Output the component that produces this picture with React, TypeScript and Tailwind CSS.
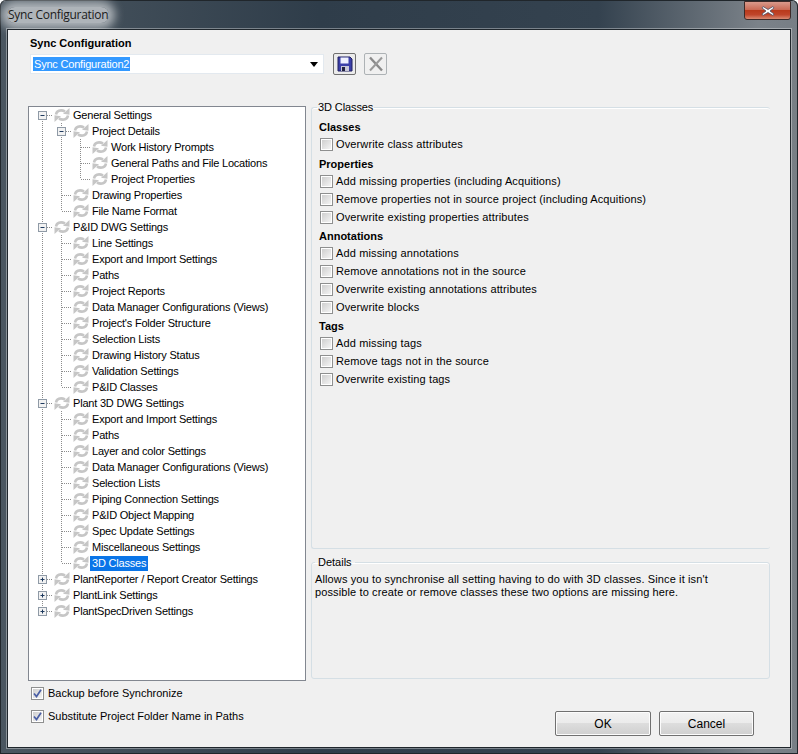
import React from 'react';

type TreeNode = { label: string; open?: boolean; selected?: boolean; children?: TreeNode[] };

const tree: TreeNode[] = [
  {
    label: 'General Settings',
    open: true,
    children: [
      {
        label: 'Project Details',
        open: true,
        children: [{ label: 'Work History Prompts' }, { label: 'General Paths and File Locations' }, { label: 'Project Properties' }],
      },
      { label: 'Drawing Properties' },
      { label: 'File Name Format' },
    ],
  },
  {
    label: 'P&ID DWG Settings',
    open: true,
    children: [
      { label: 'Line Settings' },
      { label: 'Export and Import Settings' },
      { label: 'Paths' },
      { label: 'Project Reports' },
      { label: 'Data Manager Configurations (Views)' },
      { label: "Project's Folder Structure" },
      { label: 'Selection Lists' },
      { label: 'Drawing History Status' },
      { label: 'Validation Settings' },
      { label: 'P&ID Classes' },
    ],
  },
  {
    label: 'Plant 3D DWG Settings',
    open: true,
    children: [
      { label: 'Export and Import Settings' },
      { label: 'Paths' },
      { label: 'Layer and color Settings' },
      { label: 'Data Manager Configurations (Views)' },
      { label: 'Selection Lists' },
      { label: 'Piping Connection Settings' },
      { label: 'P&ID Object Mapping' },
      { label: 'Spec Update Settings' },
      { label: 'Miscellaneous Settings' },
      { label: '3D Classes', selected: true },
    ],
  },
  { label: 'PlantReporter / Report Creator Settings', children: [] },
  { label: 'PlantLink Settings', children: [] },
  { label: 'PlantSpecDriven Settings', children: [] },
];

const sections = [
  { title: 'Classes', cls: 'mt-0', items: ['Overwrite class attributes'] },
  {
    title: 'Properties',
    cls: 'mt-[3px]',
    items: [
      'Add missing properties (including Acquitions)',
      'Remove properties not in source project (including Acquitions)',
      'Overwrite existing properties attributes',
    ],
  },
  {
    title: 'Annotations',
    cls: 'mt-[2px]',
    items: [
      'Add missing annotations',
      'Remove annotations not in the source',
      'Overwrite existing annotations attributes',
      'Overwrite blocks',
    ],
  },
  { title: 'Tags', cls: 'mt-[2px]', items: ['Add missing tags', 'Remove tags not in the source', 'Overwrite existing tags'] },
];

function SyncIcon() {
  return (
    <svg width="16" height="16" viewBox="0 0 16 16" className="shrink-0" fill="none">
      <path d="M2 7.5C2.5 4 6.5 2 11 4.5" stroke="#c6c6c6" strokeWidth="2.6" />
      <path d="M9 6.8L15.5 1V7.8Z" fill="#c6c6c6" />
      <path d="M14 8.5C13.5 12 9.5 14 5 11.5" stroke="#c6c6c6" strokeWidth="2.6" />
      <path d="M7 9.2L0.5 15V8.2Z" fill="#c6c6c6" />
    </svg>
  );
}

// one 19x16 cell of the tree: guide line, elbow and optional +/- box
function TreeCell({ guide, elbow, hasNext, box, open, top }: { guide?: boolean; elbow?: boolean; hasNext?: boolean; box?: boolean; open?: boolean; top?: boolean }) {
  return (
    <svg width="19" height="16" viewBox="0 0 19 16" className="shrink-0">
      <g stroke="#8c8c8c" strokeDasharray="1 1" fill="none">
        {guide && <path d="M9.5 0V16" />}
        {elbow && <path d={hasNext ? (top ? 'M9.5 8V16' : 'M9.5 0V16') : 'M9.5 0V8'} />}
        {elbow && <path d="M10 8.5H20" />}
      </g>
      {box && (
        <g>
          <rect x="5.5" y="4.5" width="8" height="8" fill="#f2f2f2" stroke="#8f9aa6" />
          <path d={open ? 'M7.5 8.5H11.5' : 'M7.5 8.5H11.5M9.5 6.5V10.5'} stroke="#1e3a5f" />
        </g>
      )}
    </svg>
  );
}

function TreeRows({ nodes, guides }: { nodes: TreeNode[]; guides: boolean[] }) {
  return (
    <>
      {nodes.map((node, i) => {
        const hasNext = i < nodes.length - 1;
        return (
          <React.Fragment key={node.label + i}>
            <div className="flex h-4 items-center">
              {guides.map((g, j) => (
                <TreeCell key={j} guide={g} />
              ))}
              <TreeCell elbow hasNext={hasNext} top={guides.length === 0 && i === 0} box={!!node.children} open={node.open} />
              <div className="ml-[2px] flex items-center">
                <SyncIcon />
                <span
                  className={
                    node.selected
                      ? 'ml-[1px] h-[15px] bg-[#0a75e8] px-[2px] leading-[15px] tracking-[-0.2px] whitespace-nowrap text-white'
                      : 'ml-[3px] leading-4 tracking-[-0.2px] whitespace-nowrap'
                  }
                >
                  {node.label}
                </span>
              </div>
            </div>
            {node.open && node.children && <TreeRows nodes={node.children} guides={[...guides, hasNext]} />}
          </React.Fragment>
        );
      })}
    </>
  );
}

function CheckBox({ checked }: { checked?: boolean }) {
  return (
    <span className="flex h-[13px] w-[13px] shrink-0 items-center justify-center border border-[#8e8f8f] bg-white p-[1px]">
      <span className="flex h-full w-full items-center justify-center bg-gradient-to-br from-[#cfcfcf] to-[#f4f4f4]">
        {checked && (
          <svg width="9" height="9" viewBox="0 0 9 9" fill="none">
            <path d="M1 4.5L3.5 7.5L8 0.8" stroke="#4a5fa5" strokeWidth="1.7" />
          </svg>
        )}
      </span>
    </span>
  );
}

function PushButton({ label, cls }: { label: string; cls: string }) {
  return (
    <button className={`${cls} flex h-[25px] items-center justify-center rounded-[2px] border border-[#707070] bg-[linear-gradient(#f2f2f2_0%,#ebebeb_48%,#dddddd_50%,#cfcfcf_100%)] text-[12px] text-black shadow-[inset_0_0_0_1px_#fcfcfc]`}>
      {label}
    </button>
  );
}

export default function App() {
  return (
    <div className="h-[754px] w-[798px] overflow-hidden bg-white font-['Liberation_Sans',sans-serif] text-[11px] text-black">
      <div className="flex h-full w-full flex-col rounded-t-[6px] bg-[linear-gradient(90deg,#4a5660_0%,#2f3d4a_40%,#34424f_75%,#7b8289_95%,#777e85_100%)] pr-[7px] pb-[6px] pl-[7px] shadow-[inset_0_0_0_1px_#20262b,inset_0_2px_0_-1px_#c8d0d6]">
        <div className="flex h-[29px] shrink-0 items-start justify-between bg-transparent">
          <span className="mt-[7px] rounded-full bg-[#c9cdd1]/80 px-[1px] font-['Open_Sans',sans-serif] text-[12px] leading-4 tracking-[-0.28px] text-[#1b1b1b] shadow-[0_0_10px_6px_rgba(201,205,209,0.8)]">
            Sync Configuration
          </span>
          <div className="mt-[1px] flex h-[19px] w-[47px] items-center justify-center rounded-b-[3px] border border-[#3d2a28] bg-[linear-gradient(#d99a8c_0%,#c96a55_45%,#b93a1c_50%,#c0452a_75%,#d98a72_100%)]">
            <svg width="16" height="12" viewBox="0 0 16 12">
              <path d="M3 1.5L8 4.5L13 1.5L14 3L10 6L14 9L13 10.5L8 7.5L3 10.5L2 9L6 6L2 3Z" fill="#ffffff" stroke="#4b4f66" strokeWidth="0.8" />
            </svg>
          </div>
        </div>

        <div className="flex min-h-0 flex-1 flex-col border border-[#1f262c] bg-[#f0f0f0] pr-[20px] pl-[20px] shadow-[0_0_0_1px_rgba(255,255,255,0.35)]">
          <div className="mt-[6px] pl-[2px] text-[11px] leading-[14px] font-bold">Sync Configuration</div>
          <div className="mt-[3px] flex items-center pl-[2px]">
            <div className="flex h-[20px] w-[294px] items-center justify-between border border-[#e3e9ef] bg-white pr-[4px] pl-[2px] text-[11px]">
              <span className="h-[14px] bg-[#3399ff] px-[1px] leading-[14px] tracking-[-0.2px] text-white">Sync Configuration2</span>
              <svg width="8" height="5" viewBox="0 0 8 5" className="mr-[1px]">
                <path d="M0 0H8L4 5Z" fill="#000000" />
              </svg>
            </div>
            <div className="ml-[9px] flex h-[22px] w-[23px] items-center justify-center rounded-[2px] border border-[#707070] bg-[#ebebeb]">
              <svg width="16" height="16" viewBox="0 0 16 16">
                <path d="M1 1H13L15 3V15H1Z" fill="#3b3fa8" stroke="#202060" />
                <rect x="3.5" y="1.5" width="8" height="6" fill="#eef0ff" />
                <rect x="4" y="10" width="8" height="5" fill="#c8c8d8" />
                <rect x="5" y="11" width="3" height="4" fill="#202040" />
              </svg>
            </div>
            <div className="ml-[8px] flex h-[22px] w-[23px] items-center justify-center rounded-[2px] border border-[#adb2b5] bg-[#f0f0f0]">
              <svg width="16" height="16" viewBox="0 0 16 16">
                <path d="M2 1.5L14 14.5" stroke="#8a8a8a" strokeWidth="2.4" />
                <path d="M14 1.5L2 14.5" stroke="#9a9a9a" strokeWidth="2" />
              </svg>
            </div>
          </div>

          <div className="mt-[26px] grid grid-cols-[278px_459px] gap-x-[5px]">
            <div className="mt-[5px] flex h-[575px] flex-col overflow-hidden border border-[#828790] bg-white pl-[4px]">
              <TreeRows nodes={tree} guides={[]} />
            </div>
            <div className="-mt-[1px] flex flex-col">
              <fieldset className="flex h-[449px] flex-col rounded-[3px] border-t border-b border-l border-[#d5dfe5] pl-[6px] shadow-[inset_0_1px_0_#ffffff]">
                <legend className="ml-[-1px] px-[1px] leading-[14px] tracking-[-0.1px]">3D Classes</legend>
                <div className="mt-[5px] flex flex-col">
                  {sections.map((s) => (
                    <div key={s.title} className={s.cls}>
                      <div className="h-4 pl-[1px] text-[11px] leading-4 font-bold">{s.title}</div>
                      {s.items.map((item) => (
                        <div key={item} className="flex h-[18px] items-center gap-[3px] pl-[2px] text-[11px] tracking-[0.13px]">
                          <CheckBox />
                          <span className="whitespace-nowrap">{item}</span>
                        </div>
                      ))}
                    </div>
                  ))}
                </div>
              </fieldset>
              <fieldset className="mt-[6px] h-[124px] rounded-[3px] border border-[#d5dfe5] pr-[4px] pl-[3px] shadow-[inset_0_1px_0_#ffffff]">
                <legend className="px-[3px] leading-[14px]">Details</legend>
                <p className="mt-[4px] w-[410px] leading-[13px] tracking-[0.12px]">
                  Allows you to synchronise all setting having to do with 3D classes. Since it isn't possible to create or remove classes these two options are missing here.
                </p>
              </fieldset>
            </div>
          </div>

          <div className="flex items-start justify-between">
            <div className="mt-[6px] flex flex-col gap-[10px] pl-[3px]">
              <div className="flex h-[13px] items-center gap-[4px]">
                <CheckBox checked />
                <span>Backup before Synchronize</span>
              </div>
              <div className="flex h-[13px] items-center gap-[4px]">
                <CheckBox checked />
                <span>Substitute Project Folder Name in Paths</span>
              </div>
            </div>
            <div className="mt-[30px] mr-[16px] flex gap-[8px]">
              <PushButton label="OK" cls="w-[96px]" />
              <PushButton label="Cancel" cls="w-[95px]" />
            </div>
          </div>
        </div>
      </div>
    </div>
  );
}
